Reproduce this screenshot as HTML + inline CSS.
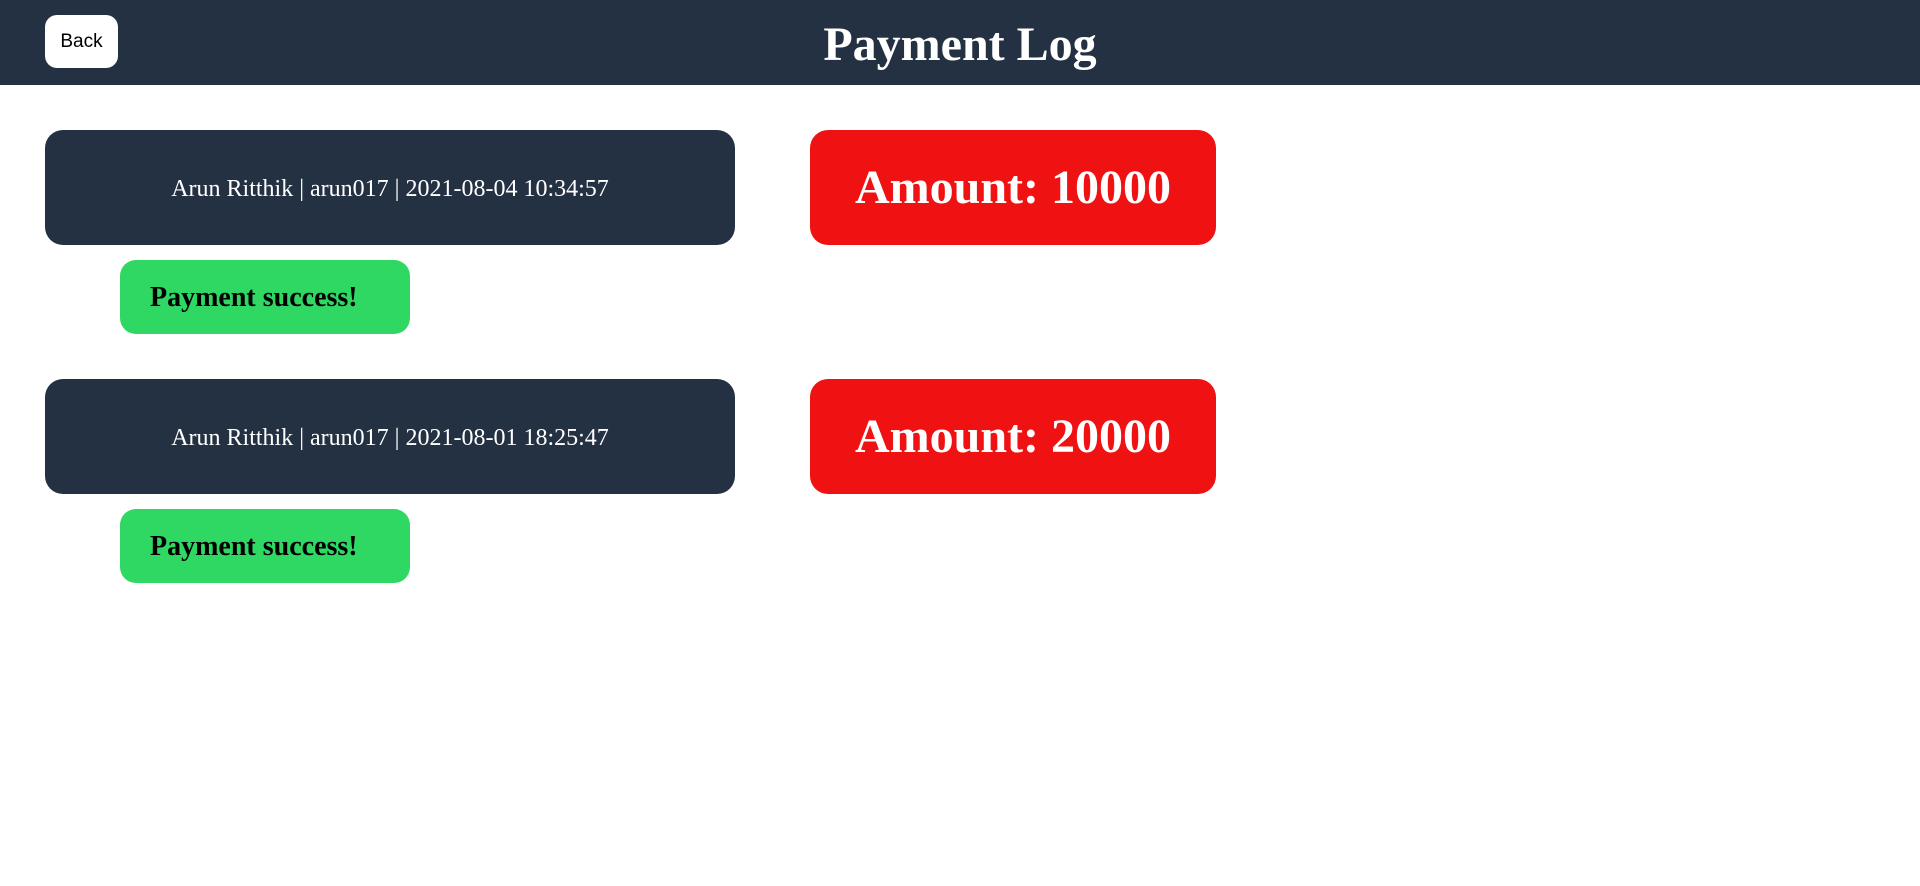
<!DOCTYPE html>
<html><head><style>
body{margin:0;width:1920px;height:886px;background:#fff;font-family:"Liberation Serif",serif;position:relative;overflow:hidden}
.hdr{position:absolute;left:0;top:0;width:1920px;height:85px;background:#243142}
.back{position:absolute;left:45px;top:15px;width:73px;height:53px;background:#fff;border-radius:12px;font-family:"Liberation Sans",sans-serif;font-size:19px;line-height:53px;text-align:center;color:#000}
.title{position:absolute;left:0;width:1920px;top:14px;text-align:center;color:#fff;font-weight:bold;font-size:48px;line-height:62px}
.info{position:absolute;left:45px;width:690px;height:115px;background:#243142;border-radius:18px;color:#fff;font-size:24px;line-height:118px;text-align:center}
.amt{position:absolute;left:810px;width:406px;height:115px;background:#f01212;border-radius:18px;color:#fff;font-size:48px;font-weight:bold;line-height:115px;text-align:center}
.ok{position:absolute;left:120px;width:290px;height:74px;background:#2ed863;border-radius:16px;font-size:28px;font-weight:bold;line-height:76px;padding-left:30px;box-sizing:border-box;color:#000}
</style></head><body>
<div class="hdr"><div class="back">Back</div><div class="title">Payment Log</div></div>
<div class="info" style="top:130px">Arun Ritthik | arun017 | 2021-08-04 10:34:57</div>
<div class="amt" style="top:130px">Amount: 10000</div>
<div class="ok" style="top:260px">Payment success!</div>
<div class="info" style="top:379px">Arun Ritthik | arun017 | 2021-08-01 18:25:47</div>
<div class="amt" style="top:379px">Amount: 20000</div>
<div class="ok" style="top:509px">Payment success!</div>
</body></html>
